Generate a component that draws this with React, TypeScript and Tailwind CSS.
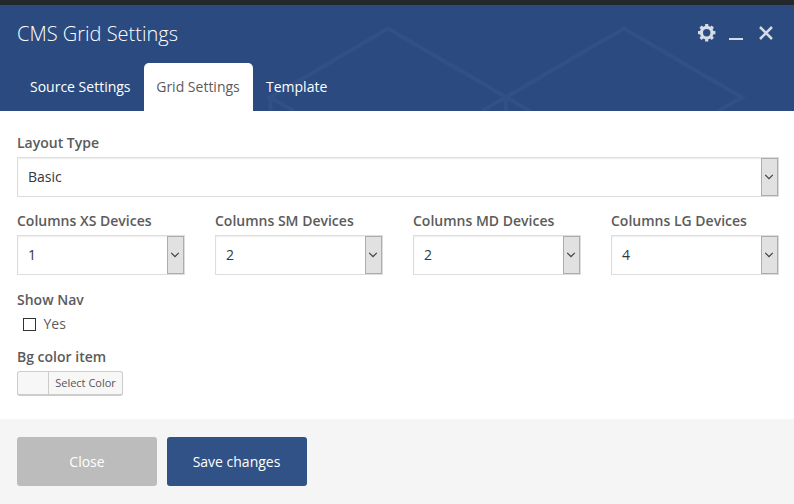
import React from 'react';

type SelectProps = { label: string; value: string };

function SelectField({ label, value }: SelectProps) {
  return (
    <div className="flex min-w-0 flex-1 flex-col">
      <span className="h-[24px] text-[14px] leading-[20px] font-semibold whitespace-nowrap text-[#5b5b5b]">{label}</span>
      <div className="flex h-[40px] items-stretch border border-[#dddddd] bg-white shadow-[inset_0_1px_2px_rgba(0,0,0,0.07)]">
        <span className="flex-1 pl-[10px] text-[14px] leading-[38px] text-[#32373c]">{value}</span>
        <span className="flex w-[17px] items-center border border-[#acacac] bg-[#e1e1e1] pl-[3px]">
          <svg width="9" height="6" viewBox="0 0 9 6" fill="none" stroke="#404040" strokeWidth="1.2">
            <path d="M0.2 0.800 4 4.600 7.800 0.800" />
          </svg>
        </span>
      </div>
    </div>
  );
}

function HeaderPattern() {
  return (
    <svg className="absolute inset-0" width="794" height="106" viewBox="0 5 794 106" fill="none" stroke="#305188" strokeWidth="4">
      <path d="M294 111 270 97.500 388 28.500 530 111" />
      <path d="M482 111 624 28.500 742 97.500 718 111" />
      <path d="M270.500 97V111M506 97V111" />
    </svg>
  );
}

function WindowControls() {
  return (
    <div className="mb-[2px] flex h-[20px] items-center text-[#d5dce7]">
      <svg width="18" height="18" viewBox="0 0 18 18" fill="none" stroke="currentColor">
        <circle cx="8.700" cy="8.700" r="5.300" strokeWidth="3.200" />
        <path
          d="M8.700 0V2.700M8.700 14.700V17.400M0 8.700H2.700M14.700 8.700H17.400M2.550 2.550 4.500 4.500M12.900 12.900 14.850 14.850M2.550 14.850 4.500 12.900M12.900 4.500 14.850 2.550"
          strokeWidth="3.200"
        />
      </svg>
      <span className="mt-[12px] ml-[13px] h-[2px] w-[14px] bg-current" />
      <svg className="ml-[16px]" width="14" height="14" viewBox="0 0 14 14" fill="none" stroke="currentColor" strokeWidth="2.500">
        <path d="M1 1 13 13M13 1 1 13" />
      </svg>
    </div>
  );
}

export default function App() {
  return (
    <div className="flex h-[504px] w-[794px] flex-col overflow-hidden bg-white font-['Open_Sans',sans-serif] text-[14px] text-[#5b5b5b]">
      <div className="h-[5px] bg-[#23282d]" />
      <header className="relative h-[106px] bg-[#2b4b80]">
        <HeaderPattern />
        <div className="relative flex h-[58px] items-center justify-between pr-[21px] pl-[17px]">
          <h1 className="text-[20px] leading-[28px] font-light text-white">CMS Grid Settings</h1>
          <WindowControls />
        </div>
        <nav className="relative flex h-[48px] pl-[17px] leading-[48px] whitespace-nowrap text-white">
          <span className="w-[127px] pl-[13px]">Source Settings</span>
          <span className="w-[109px] rounded-t-[5px] bg-white pr-px text-center text-[#5b5b5b]">Grid Settings</span>
          <span className="pl-[13px]">Template</span>
        </nav>
      </header>
      <main className="flex h-[308px] flex-col pt-[22px] pr-[15px] pl-[17px]">
        <div className="flex h-[78px]">
          <SelectField label="Layout Type" value="Basic" />
        </div>
        <div className="flex h-[79px] gap-[30px]">
          <SelectField label="Columns XS Devices" value="1" />
          <SelectField label="Columns SM Devices" value="2" />
          <SelectField label="Columns MD Devices" value="2" />
          <SelectField label="Columns LG Devices" value="4" />
        </div>
        <div className="h-[57px]">
          <div className="h-[24px] leading-[20px] font-semibold">Show Nav</div>
          <div className="flex h-[20px] items-center pl-[6px]">
            <span className="h-[13px] w-[13px] border border-[#333333] bg-white" />
            <span className="ml-[7.5px] leading-[20px]">Yes</span>
          </div>
        </div>
        <div>
          <div className="h-[24px] leading-[20px] font-semibold">Bg color item</div>
          <div className="flex h-[25px] w-[106px] overflow-hidden rounded-[3px] border border-b-2 border-[#cccccc] bg-[#f7f7f7]">
            <span className="w-[31px] border-r border-[#cccccc]" />
            <span className="flex-1 text-center text-[11px] leading-[22px] whitespace-nowrap text-[#555555]">Select Color</span>
          </div>
        </div>
      </main>
      <footer className="flex h-[85px] gap-[10px] bg-[#f5f5f5] px-[17px] pt-[18px] text-white">
        <button className="h-[49px] w-[140px] rounded-[3px] bg-[#bcbcbc]">Close</button>
        <button className="h-[49px] w-[140px] rounded-[3px] bg-[#305287] pr-px">Save changes</button>
      </footer>
    </div>
  );
}
